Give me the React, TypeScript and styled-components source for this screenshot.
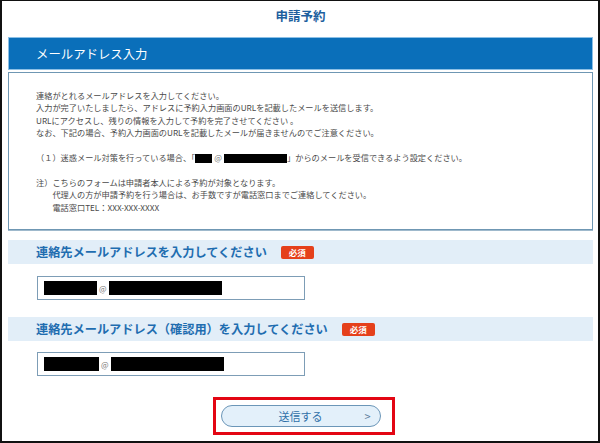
import styled, { createGlobalStyle } from "styled-components";

const GlobalStyle = createGlobalStyle`
  html, body {
    margin: 0;
    padding: 0;
    background: #fff;
  }
  body {
    font-family: "Noto Sans CJK JP", "Noto Sans", sans-serif;
  }
`;

const Page = styled.div`
  box-sizing: border-box;
  width: 600px;
  height: 443px;
  border: 2px solid #111;
  border-top-width: 1px;
  padding: 0 5px 0 6px;
  display: flex;
  flex-direction: column;
  overflow: hidden;
`;

const PageTitle = styled.h1`
  margin: 6px 0 12px;
  text-align: center;
  font-size: 12.5px;
  line-height: 18px;
  font-weight: 700;
  color: #1d5f9e;
`;

const SectionBar = styled.div`
  height: 33px;
  background: #0a6fba;
  border: 1px solid #8cc0e6;
  box-sizing: border-box;
  display: flex;
  align-items: center;
  padding-left: 27px;
  color: #fff;
  font-size: 12.4px;
`;

const NoticeBox = styled.div`
  margin-top: 2px;
  border: 1px solid #6f97b3;
  box-shadow: 0 1px 0 #9fb9cc;
  padding: 16px 12px 16px 27px;
  font-size: 8.2px;
  line-height: 12.4px;
  color: #4a4a4a;
`;

const Line = styled.p<{ $gap?: boolean; $indent?: boolean }>`
  margin: ${(p) => (p.$gap ? "12.4px" : "0")} 0 0;
  padding-left: ${(p) => (p.$indent ? "16.4px" : "0")};
  white-space: nowrap;
`;

const Redact = styled.span<{ $w: number; $h?: number }>`
  display: inline-block;
  width: ${(p) => p.$w}px;
  height: ${(p) => p.$h ?? 9}px;
  background: #000;
  vertical-align: middle;
`;

const At = styled.span`
  color: #777;
  margin: 0 2px;
`;

const FieldHeading = styled.div<{ $top: number }>`
  margin-top: ${(p) => p.$top}px;
  height: 24px;
  background: #e2eef8;
  display: flex;
  align-items: center;
  gap: 14px;
  padding-left: 28px;
  font-size: 12.2px;
  font-weight: 700;
  color: #1f6db0;
`;

const Required = styled.span`
  display: inline-flex;
  align-items: center;
  justify-content: center;
  width: 33px;
  height: 13px;
  border-radius: 2px;
  background: #e5401b;
  color: #fff;
  font-size: 8.5px;
  font-weight: 700;
`;

const Field = styled.div<{ $top: number }>`
  box-sizing: border-box;
  margin: ${(p) => p.$top}px 0 0 29px;
  width: 268px;
  height: 24px;
  border: 1px solid #7d9db6;
  display: flex;
  align-items: center;
  padding-left: 6px;
  font-size: 8px;
`;

const Highlight = styled.div`
  align-self: center;
  margin-top: 21px;
  margin-left: 6px;
  border: 3px solid #e30613;
  padding: 5px 11px 5px 5px;
`;

const SubmitButton = styled.button`
  display: block;
  width: 160px;
  height: 22px;
  border-radius: 11px;
  border: 1px solid #6b96b8;
  background: #e3f0fa;
  color: #2f6fa8;
  font-family: inherit;
  font-size: 11px;
  position: relative;
  padding: 0;
  cursor: pointer;
`;

const Chevron = styled.span`
  position: absolute;
  right: 9px;
  top: 50%;
  transform: translateY(-52%);
  color: #5d7f9c;
  font-size: 11px;
`;

const App = () => {
  return (
    <>
      <GlobalStyle />
      <Page>
        <PageTitle>申請予約</PageTitle>
        <SectionBar>メールアドレス入力</SectionBar>
        <NoticeBox>
          <Line>連絡がとれるメールアドレスを入力してください。</Line>
          <Line>入力が完了いたしましたら、アドレスに予約入力画面のURLを記載したメールを送信します。</Line>
          <Line>URLにアクセスし、残りの情報を入力して予約を完了させてください 。</Line>
          <Line>なお、下記の場合、予約入力画面のURLを記載したメールが届きませんのでご注意ください。</Line>
          <Line $gap>
            （１）迷惑メール対策を行っている場合、「<Redact $w={17} />
            <At>@</At>
            <Redact $w={63} />」からのメールを受信できるよう設定ください。
          </Line>
          <Line $gap>注）こちらのフォームは申請者本人による予約が対象となります。</Line>
          <Line $indent>代理人の方が申請予約を行う場合は、お手数ですが電話窓口までご連絡してください。</Line>
          <Line $indent>電話窓口TEL：XXX-XXX-XXXX</Line>
        </NoticeBox>

        <FieldHeading $top={10}>
          連絡先メールアドレスを入力してください
          <Required>必須</Required>
        </FieldHeading>
        <Field $top={12}>
          <Redact $w={53} $h={14} />
          <At>@</At>
          <Redact $w={113} $h={14} />
        </Field>

        <FieldHeading $top={17}>
          連絡先メールアドレス（確認用）を入力してください
          <Required>必須</Required>
        </FieldHeading>
        <Field $top={11}>
          <Redact $w={55} $h={14} />
          <At>@</At>
          <Redact $w={113} $h={14} />
        </Field>

        <Highlight>
          <SubmitButton type="button">
            送信する
            <Chevron>&gt;</Chevron>
          </SubmitButton>
        </Highlight>
      </Page>
    </>
  );
};

export default App;
